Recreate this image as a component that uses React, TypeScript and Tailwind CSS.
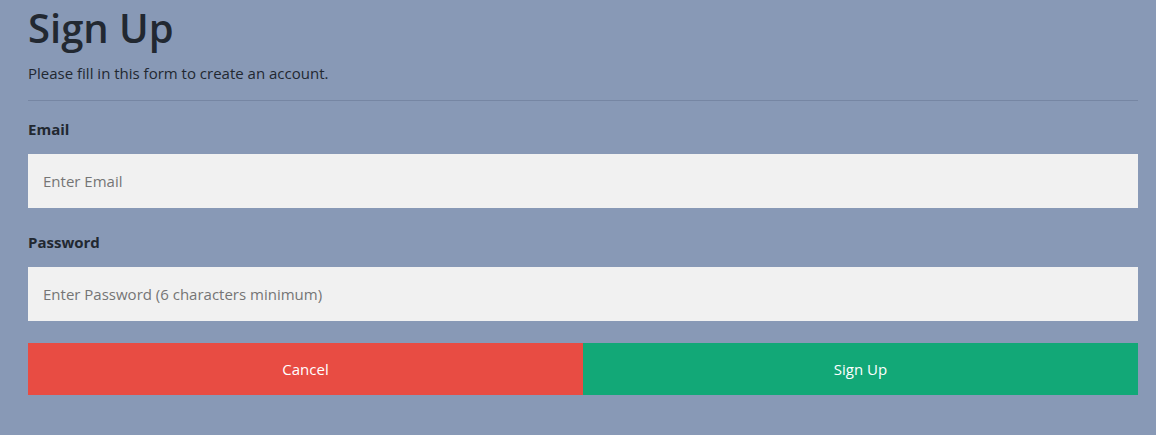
export default function App() {
  return (
    <div
      className="min-h-screen bg-[#8899b6] pl-7 pr-[18px] text-[#222831]"
      style={{ fontFamily: '"Open Sans", "Noto Sans", sans-serif' }}
    >
      <h1 className="pt-1 text-[40px] font-semibold leading-[48px]">Sign Up</h1>
      <p className="mt-[11px] text-[15px] leading-5">
        Please fill in this form to create an account.
      </p>
      <hr className="mt-[17px] border-t border-[#7686a3]" />

      <form className="mt-[18px]">
        <label className="block text-[15px] font-bold leading-5">Email</label>
        <input
          type="text"
          placeholder="Enter Email"
          className="mt-[15px] block h-[54px] w-full bg-[#f1f1f1] px-[15px] text-[15px] outline-none placeholder:text-[#757575]"
        />

        <label className="mt-6 block text-[15px] font-bold leading-5">
          Password
        </label>
        <input
          type="password"
          placeholder="Enter Password (6 characters minimum)"
          className="mt-[15px] block h-[54px] w-full bg-[#f1f1f1] px-[15px] text-[15px] outline-none placeholder:text-[#757575]"
        />

        <div className="mt-[22px] flex">
          <button
            type="button"
            className="h-[52px] flex-1 bg-[#e84c43] text-[15px] text-white"
          >
            Cancel
          </button>
          <button
            type="submit"
            className="h-[52px] flex-1 bg-[#12a877] text-[15px] text-white"
          >
            Sign Up
          </button>
        </div>
      </form>
    </div>
  )
}
